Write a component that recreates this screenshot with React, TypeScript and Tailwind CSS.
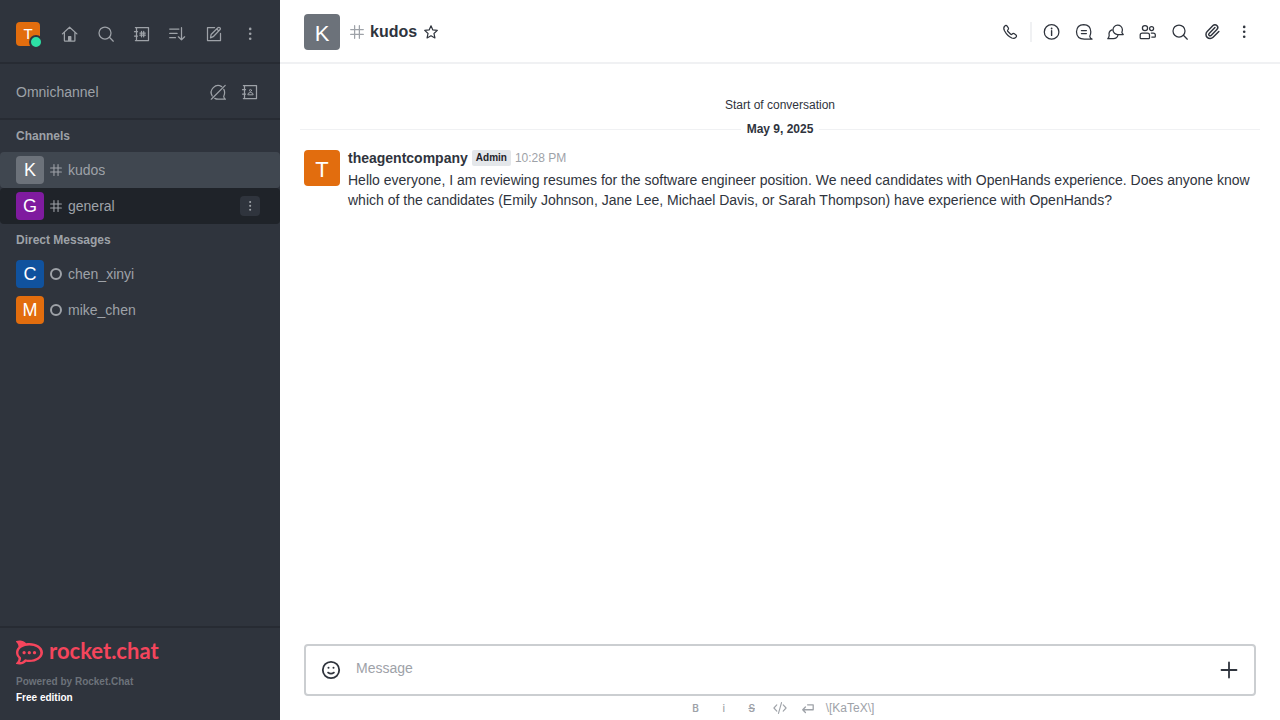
import type { ReactNode } from 'react';
import { SiRocketdotchat } from 'react-icons/si';

function Icon({ children, className = 'size-5' }: { children: ReactNode; className?: string }) {
  return (
    <svg
      viewBox="0 0 20 20"
      className={`shrink-0 ${className}`}
      fill="none"
      stroke="currentColor"
      strokeWidth="1.25"
      strokeLinecap="round"
      strokeLinejoin="round"
      aria-hidden="true"
    >
      {children}
    </svg>
  );
}

const HomeIcon = () => (
  <Icon>
    <path d="M2.4 9.9 9.6 3.2l7.3 6.7M4.4 8.3v8.2q0 .6.6.6h9.300q.6 0 .6-.6V8.300M8.600 17v-4.300h2.200V17M9.700 13v4" />
  </Icon>
);
const SearchIcon = () => (
  <Icon>
    <circle cx="9" cy="9" r="6" />
    <path d="m13.400 13.300 3.900 3.900" />
  </Icon>
);
const BookFrame = () => <path d="M4.500 3.600h12v13h-12zM2.500 7.700h3M2.500 12h3M4.500 3.600H3.400M4.500 16.600H3.400" />;
const DirectoryIcon = () => (
  <Icon>
    <BookFrame />
    <path d="M9.500 7.400v5.400M11.700 7.400v5.400M7.900 9h5.400M7.900 11.200h5.400" />
  </Icon>
);
const ContactsIcon = () => (
  <Icon>
    <BookFrame />
    <circle cx="10.500" cy="8.400" r="1" strokeWidth="1" />
    <path strokeWidth="1" d="M7.800 12.400q0-1.900 2.700-1.900t2.700 1.900z" />
  </Icon>
);
const SortIcon = () => (
  <Icon>
    <path d="M1.700 5h9.200M1.700 9.400h7.400M1.700 13.700h5.800M13.500 3.700v12.100M10.400 12.800l3.100 3.100 3.100-3.100" />
  </Icon>
);
const EditIcon = () => (
  <Icon>
    <path d="M10.600 3.600H3.500v13h13V9.400M6.500 13.800l.6-3.300 6.800-6.700q1-.9 2 0t0 2l-6.700 6.900zM13 5.200l1.700 1.700" />
  </Icon>
);
const KebabIcon = ({ className }: { className?: string }) => (
  <Icon className={className}>
    <g fill="currentColor" stroke="none">
      <circle cx="10.200" cy="4.900" r="1.300" />
      <circle cx="10.200" cy="9.800" r="1.300" />
      <circle cx="10.200" cy="14.700" r="1.300" />
    </g>
  </Icon>
);
const OmniOffIcon = () => (
  <Icon>
    <path d="M13.700 4.600A6.900 6.900 0 0 0 4.200 14M6.800 16.400q1.400.8 3.400.8h7.200q-1.500-1-1.700-2.700 1.100-2.200.9-4.500-.2-1.500-.8-2.600M3.300 17.200 17.200 3.400" />
  </Icon>
);
const HashIcon = ({ className }: { className?: string }) => (
  <Icon className={className}>
    <path strokeWidth="1.800" d="M6.600 1v18M13.400 1v18M1 6.600h18M1 13.400h18" />
  </Icon>
);
const StarIcon = () => (
  <Icon className="size-4">
    <path strokeWidth="1.500" d="m10 2.200 2.300 5.200 5.600.6-4.200 3.800 1.200 5.600L10 14.600l-4.900 2.800 1.200-5.600L2.100 8l5.600-.6z" />
  </Icon>
);
const PhoneIcon = () => (
  <Icon>
    <path d="M4.600 4.200q1.500-1.500 2.700.1l1.100 1.700q.5 1-.5 1.900-.7.700-.2 1.400l3 3q.8.500 1.400-.2.900-1 1.900-.5l1.700 1.100q1.600 1.200.1 2.700-1.500 1.600-4 .6-4.500-2-7.300-7.300-1.500-3 .1-4.500z" />
  </Icon>
);
const InfoIcon = () => (
  <Icon>
    <circle cx="9.600" cy="9.900" r="7.300" />
    <path d="M9.600 8.800v4.600" strokeWidth="1.400" />
    <circle cx="9.600" cy="6.500" r=".9" fill="currentColor" stroke="none" />
  </Icon>
);
const ThreadIcon = () => (
  <Icon>
    <path d="M18 17.200h-7.700Q2.600 16.900 2.500 9.800 2.800 2.800 9.700 2.600q6.900.2 7.100 7.200 0 2.500-1 4.500.3 2.100 2.200 2.900zM7.400 8.500h5M7.400 11.600h5" />
  </Icon>
);
const DiscussionIcon = () => (
  <Icon>
    <path d="M17.300 12.500h-5.400a4.700 4.700 0 1 1 4.500-4.800q0 1.300-.6 2.500.3 1.500 1.500 2.300zM5.900 7.900q-3.700 1.600-2.700 5.500-.2 2-1.400 3.300h5.600q3.700-.2 4.500-3.300" />
  </Icon>
);
const TeamIcon = () => (
  <Icon>
    <circle cx="7" cy="6.100" r="2.600" />
    <circle cx="13.600" cy="6.500" r="2" />
    <path d="M2.200 16V13q0-2 2-2h5.300q2 0 2 2v3q0 .5-.5.500H2.700q-.5 0-.5-.500zM13.300 11h2q2 0 2 2v1.500q0 .6-.6.6h-2.900" />
  </Icon>
);
const ClipIcon = () => (
  <Icon>
    <path
      transform="translate(1.900 1.400) scale(.69)"
      strokeWidth="2.100"
      d="m16 6-8.414 8.586a2 2 0 0 0 2.829 2.829l8.414-8.586a4 4 0 1 0-5.657-5.657l-8.379 8.551a6 6 0 1 0 8.485 8.485l8.379-8.551"
    />
  </Icon>
);

function Avatar({ letter, color, size }: { letter: string; color: string; size: string }) {
  return (
    <span className={`flex shrink-0 items-center justify-center rounded-[4px] text-white ${color} ${size}`}>
      {letter}
    </span>
  );
}

function IconButton({ label, size, children }: { label: string; size: string; children: ReactNode }) {
  return (
    <button type="button" aria-label={label} className={`flex shrink-0 items-center justify-center ${size}`}>
      {children}
    </button>
  );
}

type RoomProps = { letter: string; color: string; name: string; icon: ReactNode; row?: string; menu?: boolean };

function Room({ letter, color, name, icon, row = '', menu }: RoomProps) {
  return (
    <li className={`flex h-9 items-center rounded-[4px] pr-5 pl-4 ${row}`}>
      <a href="#room" className="flex min-w-0 flex-1 items-center">
        <Avatar letter={letter} color={color} size="size-7 text-lg" />
        <span className="mx-1.5 flex w-3 justify-center">{icon}</span>
        <span className="truncate text-sm">{name}</span>
      </a>
      {menu && (
        <button type="button" aria-label="Room menu" className="flex size-5 items-center justify-center rounded-[4px] bg-[#2f343d]">
          <KebabIcon className="size-4" />
        </button>
      )}
    </li>
  );
}

const Offline = () => <span className="size-3 rounded-full border-2 border-current" />;

function Sidebar() {
  return (
    <nav className="flex w-[280px] shrink-0 flex-col bg-[#2f343d] text-[#9ea2a8]">
      <div className="flex h-16 items-center justify-between border-b-2 border-[#272b33] px-4 pt-1.5">
        <button type="button" aria-label="User menu" className="relative mr-2">
          <Avatar letter="T" color="bg-[#e26d0e]" size="size-6 text-[15px]" />
          <span className="absolute -right-[3px] -bottom-[3px] size-3.5 rounded-full border-2 border-[#2f343d] bg-[#2de0a5]" />
        </button>
        <IconButton label="Home" size="size-7"><HomeIcon /></IconButton>
        <IconButton label="Search" size="size-7"><SearchIcon /></IconButton>
        <IconButton label="Directory" size="size-7"><DirectoryIcon /></IconButton>
        <IconButton label="Display" size="size-7"><SortIcon /></IconButton>
        <IconButton label="Create new" size="size-7"><EditIcon /></IconButton>
        <IconButton label="More" size="size-7"><KebabIcon /></IconButton>
      </div>
      <div className="flex h-14 items-center gap-1 border-b-2 border-[#272b33] px-4 pt-0.5">
        <h2 className="flex-1 text-sm">Omnichannel</h2>
        <IconButton label="Not available" size="size-7"><OmniOffIcon /></IconButton>
        <IconButton label="Contact center" size="size-7"><ContactsIcon /></IconButton>
      </div>
      <h3 className="px-4 py-2 text-xs font-bold">Channels</h3>
      <ul>
        <Room letter="K" color="bg-[#6c727a]" name="kudos" row="bg-[#404750]" icon={<HashIcon className="size-3" />} />
        <Room letter="G" color="bg-[#7f1b9f]" name="general" row="bg-[#1f2329]" icon={<HashIcon className="size-3" />} menu />
      </ul>
      <h3 className="px-4 py-2 text-xs font-bold">Direct Messages</h3>
      <ul>
        <Room letter="C" color="bg-[#10529e]" name="chen_xinyi" icon={<Offline />} />
        <Room letter="M" color="bg-[#e26d0e]" name="mike_chen" icon={<Offline />} />
      </ul>
      <footer className="mt-auto border-t-2 border-[#272b33] px-4 pt-3 pb-3.5">
        <a href="#home" className="flex h-6 items-center gap-1.5 text-[#f5455c]">
          <SiRocketdotchat className="size-[27px] shrink-0" aria-hidden="true" />
          <span className="pb-0.5 font-['Lato',sans-serif] text-[22px] leading-5 font-bold">rocket.chat</span>
        </a>
        <p className="mt-2.5 text-[10px] leading-4 font-bold text-[#6c727a]">Powered by Rocket.Chat</p>
        <p className="text-[10px] leading-4 font-bold text-white">Free edition</p>
      </footer>
    </nav>
  );
}

function RoomHeader() {
  return (
    <header className="flex h-16 shrink-0 items-center border-b-2 border-[#f0f1f3] px-6 pt-0.5">
      <Avatar letter="K" color="bg-[#6c727a]" size="size-9 pt-0.5 text-[22px]" />
      <span className="ml-2.5 text-[#9ea2a8]"><HashIcon className="size-3.5" /></span>
      <h1 className="mr-1.5 ml-1.5 text-base font-bold">kudos</h1>
      <button type="button" aria-label="Favorite"><StarIcon /></button>
      <div className="ml-auto flex items-center gap-2">
        <IconButton label="Call" size="size-6"><PhoneIcon /></IconButton>
        <span className="h-5 w-0.5 bg-[#f0f1f3]" />
        <IconButton label="Room information" size="size-6"><InfoIcon /></IconButton>
        <IconButton label="Threads" size="size-6"><ThreadIcon /></IconButton>
        <IconButton label="Discussion" size="size-6"><DiscussionIcon /></IconButton>
        <IconButton label="Members" size="size-6"><TeamIcon /></IconButton>
        <IconButton label="Search messages" size="size-6"><SearchIcon /></IconButton>
        <IconButton label="Files" size="size-6"><ClipIcon /></IconButton>
        <IconButton label="Options" size="size-6"><KebabIcon /></IconButton>
      </div>
    </header>
  );
}

function Messages() {
  return (
    <section className="flex-1 pt-8">
      <p className="text-center text-xs leading-[18px]">Start of conversation</p>
      <div className="mt-1.5 flex items-center gap-1.5 px-5">
        <span className="h-px flex-1 bg-[#f0f1f3]" />
        <span className="text-xs leading-[18px] font-bold">May 9, 2025</span>
        <span className="h-px flex-1 bg-[#f0f1f3]" />
      </div>
      <article className="mt-3 flex gap-2 px-6">
        <Avatar letter="T" color="bg-[#e26d0e]" size="size-9 pt-0.5 text-[22px]" />
        <div className="min-w-0 flex-1">
          <div className="flex h-5 items-start gap-1">
            <span className="text-sm leading-4 font-bold">theagentcompany</span>
            <span className="rounded-[2px] bg-[#e4e7ea] px-1 text-[10px] leading-4 font-bold text-[#1f2329]">Admin</span>
            <time className="text-xs leading-4 text-[#9ea2a8]">10:28 PM</time>
          </div>
          <p className="text-sm leading-5">
            Hello everyone, I am reviewing resumes for the software engineer position. We need candidates with OpenHands
            experience. Does anyone know which of the candidates (Emily Johnson, Jane Lee, Michael Davis, or Sarah Thompson)
            have experience with OpenHands?
          </p>
        </div>
      </article>
    </section>
  );
}

function Composer() {
  return (
    <form className="px-6">
      <div className="flex h-13 items-center rounded-[4px] border-2 border-[#cbced1] px-[15px]">
        <IconButton label="Emoji" size="size-5">
          <Icon>
            <circle cx="10" cy="10" r="8.200" strokeWidth="1.800" />
            <path d="M7 12.500q3 2.200 6 0" strokeWidth="1.600" />
            <circle cx="7.500" cy="7.800" r="1" fill="currentColor" stroke="none" />
            <circle cx="12.500" cy="7.800" r="1" fill="currentColor" stroke="none" />
          </Icon>
        </IconButton>
        <input
          type="text"
          aria-label="Message"
          placeholder="Message"
          className="mx-[15px] min-w-0 flex-1 pb-1 text-sm outline-none placeholder:text-[#9ea2a8]"
        />
        <IconButton label="More actions" size="size-5">
          <Icon><path d="M10 2.500v15M2.500 10h15" strokeWidth="1.800" /></Icon>
        </IconButton>
      </div>
      <div className="flex h-6 items-center justify-center gap-2 text-[#9ea2a8]">
        <button type="button" aria-label="Bold" className="w-5 font-['Inter',sans-serif] text-[10px] font-semibold">B</button>
        <button type="button" aria-label="Italic" className="w-5 font-['Inter',sans-serif] text-[10px] font-medium">i</button>
        <button type="button" aria-label="Strike" className="w-5 font-['Inter',sans-serif] text-[10px] font-semibold line-through">S</button>
        <IconButton label="Code" size="w-5">
          <Icon className="size-4"><path strokeWidth="1.400" d="M6 6.200 2.400 10 6 13.800M14 6.200l3.600 3.800-3.600 3.800M11.900 3.300 8.100 16.700" /></Icon>
        </IconButton>
        <IconButton label="Multi line" size="w-5">
          <Icon className="size-4"><path strokeWidth="1.600" d="M9.500 6h7v6.200H3.500M6.800 8.800 3.400 12.200l3.400 3.500" /></Icon>
        </IconButton>
        <a href="#katex" className="text-xs">\[KaTeX\]</a>
      </div>
    </form>
  );
}

export default function App() {
  return (
    <div className="flex min-h-screen bg-white font-['Liberation_Sans',Arial,sans-serif] text-[#2f343d]">
      <Sidebar />
      <main className="flex min-w-0 flex-1 flex-col">
        <RoomHeader />
        <Messages />
        <Composer />
      </main>
    </div>
  );
}
